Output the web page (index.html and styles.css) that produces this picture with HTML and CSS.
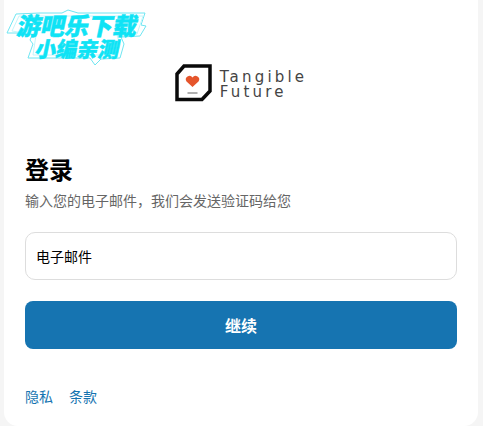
FILE: index.html
```html
<!DOCTYPE html>
<html>
<head>
    <title>登录</title>
    <link rel="stylesheet" href="styles.css">
</head>
<body>
    <div class="badge">
        <svg class="badge-outline" width="160" height="75" viewBox="0 0 160 75">
            <path d="M16 14 L40 13 L62 13 L68 10 L78 13 L145 13 L141 25 L146 26 L140 36 L121 37 L124 44 L120 58 L101 59 L95 65 L90 58 L28 58 L33 44 L30 40 L33 33 L7 33 Z" fill="#fff" stroke="#6fe6f2" stroke-width="1"/>
            <path d="M19 16 L143 16 L137 34 L117 35 L120 45 L117 55 L33 55 L36 35 L12 31 Z" fill="#fff" stroke="#c4f6fb" stroke-width="1"/>
        </svg>
        <div class="badge-line">游吧乐下载</div>
        <div class="badge-line badge-small">小编亲测</div>
    </div>
    <main class="card">
        <div class="logo">
            <svg width="38" height="38" viewBox="0 0 38 38">
                <path d="M9 2 H35 V27 L27 35.500 H2 V10 Z" fill="#fff" stroke="#0a0a0a" stroke-width="3.500"/>
                <path d="M17.500 23 L11.500 17.500 A3.400 3.400 0 0 1 17.500 13.500 A3.400 3.400 0 0 1 23.500 17.500 Z" fill="#e5552c"/>
                <rect x="12.500" y="28" width="10" height="2" fill="#b0b0b0"/>
            </svg>
            <div class="logo-name">Tangible<br>Future</div>
        </div>
        <h1 class="title">登录</h1>
        <p class="subtitle">输入您的电子邮件，我们会发送验证码给您</p>
        <div class="field">电子邮件</div>
        <button class="submit" type="button">继续</button>
        <div class="links">
            <a href="#">隐私</a>
            <a href="#">条款</a>
        </div>
    </main>
</body>
</html>
```

FILE: styles.css
```css
html, body {
    height: 100%;
}

body {
    margin: 0;
    background-color: #f5f5f5;
    font-family: "Liberation Sans", "Noto Sans CJK SC", sans-serif;
    overflow: hidden;
}

.card {
    box-sizing: border-box;
    height: 426px;
    margin: 0 5px 0 4px;
    padding: 64px 21px 0;
    background-color: #fff;
    border-radius: 0 0 14px 14px;
}

.logo {
    display: flex;
    justify-content: center;
    align-items: center;
    gap: 7px;
    height: 38px;
}

.logo-name {
    padding-top: 3px;
    font-family: "DejaVu Sans", sans-serif;
    font-size: 15px;
    line-height: 15px;
    letter-spacing: 3.200px;
    color: #444;
}

.title {
    margin: 53px 0 0;
    font-size: 24px;
    line-height: 32px;
    color: #000;
}

.subtitle {
    margin: 4px 0 0;
    font-size: 14px;
    line-height: 20px;
    color: #666;
}

.field {
    box-sizing: border-box;
    height: 48px;
    margin-top: 21px;
    padding: 0 10px;
    border: 1px solid #ddd;
    border-radius: 10px;
    font-size: 14px;
    line-height: 48px;
    color: #000;
}

.submit {
    display: block;
    width: 100%;
    height: 48px;
    margin-top: 21px;
    background-color: #1674b1;
    color: #fff;
    border: none;
    border-radius: 8px;
    font-family: inherit;
    font-size: 16px;
    font-weight: bold;
}

.links {
    display: flex;
    gap: 16px;
    margin-top: 38px;
    font-size: 14px;
    line-height: 20px;
}

.links a {
    color: #1674b1;
    text-decoration: none;
}

.badge {
    position: absolute;
    top: 0;
    left: 0;
    width: 160px;
    height: 75px;
    padding-top: 14px;
    box-sizing: border-box;
    text-align: center;
    color: #0fe3f5;
    font-weight: 900;
    z-index: 2;
}

.badge-outline {
    position: absolute;
    top: 0;
    left: 0;
}

.badge-line {
    position: relative;
    font-size: 24px;
    line-height: 25px;
    padding-right: 5px;
    -webkit-text-stroke: 0.500px #0fe3f5;
    transform: skewX(-12deg);
}

.badge-small {
    font-size: 21px;
    line-height: 22px;
}
```
